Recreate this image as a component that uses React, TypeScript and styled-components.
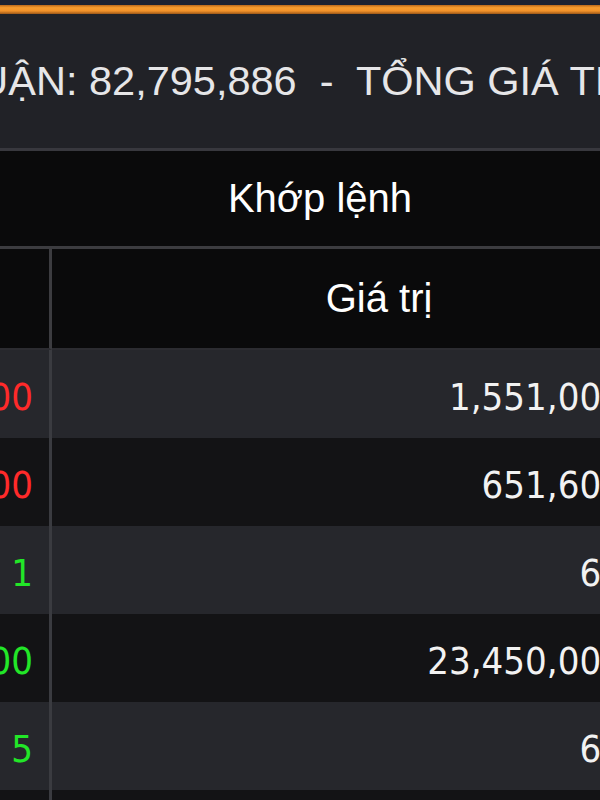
import React from "react";
import styled, { createGlobalStyle } from "styled-components";

const GlobalStyle = createGlobalStyle`
  html, body {
    margin: 0;
    padding: 0;
    background: #0b0b0c;
    overflow: hidden;
  }
  body {
    width: 600px;
    height: 800px;
    font-family: "Liberation Sans", Arial, sans-serif;
  }
`;

const Page = styled.div`
  width: 600px;
  height: 800px;
  overflow: hidden;
  display: flex;
  flex-direction: column;
  background: #0b0b0c;
`;

const TopStrip = styled.div`
  height: 5px;
  background: #1c2131;
  flex-shrink: 0;
`;

const AccentBar = styled.div`
  height: 9px;
  flex-shrink: 0;
  background: linear-gradient(
    to bottom,
    #b8671c 0%,
    #f59a2e 30%,
    #f3932a 65%,
    #9c5718 100%
  );
`;

const SummaryBar = styled.div`
  height: 134px;
  flex-shrink: 0;
  background: #212227;
  border-bottom: 3px solid #38383e;
  display: flex;
  align-items: center;
  overflow: hidden;
  white-space: nowrap;
`;

const SummaryText = styled.span`
  margin-left: -77px;
  font-family: "Liberation Sans", Arial, sans-serif;
  font-size: 41.5px;
  color: #e6e6e8;
  white-space: pre;
`;

const TableViewport = styled.div`
  flex: 1;
  overflow: hidden;
`;

const Grid = styled.div`
  margin-left: -66px;
  width: 772px;
  display: grid;
  grid-template-columns: 118px 1fr;
`;

const GroupHeader = styled.div`
  grid-column: 1 / span 2;
  height: 95px;
  background: #0a0a0b;
  border-bottom: 3px solid #3c3c40;
  display: flex;
  align-items: center;
  justify-content: center;
  font-family: "Liberation Sans", Arial, sans-serif;
  font-size: 40px;
  color: #ffffff;
`;

const ColHeader = styled.div<{ $divider?: boolean }>`
  height: 99px;
  background: #0a0a0b;
  border-bottom: 2px solid #2c2c31;
  border-right: ${(p) => (p.$divider ? "3px solid #3c3c40" : "none")};
  display: flex;
  align-items: center;
  justify-content: center;
  font-family: "Liberation Sans", Arial, sans-serif;
  font-size: 40px;
  color: #ffffff;
`;

const Cell = styled.div<{ $odd: boolean; $divider?: boolean; $tone?: "up" | "down" | "plain" }>`
  height: 88px;
  box-sizing: border-box;
  padding-top: 6px;
  background: ${(p) => (p.$odd ? "#26272c" : "#131315")};
  border-right: ${(p) => (p.$divider ? "3px solid #3a3b40" : "none")};
  display: flex;
  align-items: center;
  justify-content: flex-end;
  padding-right: ${(p) => (p.$divider ? "16px" : "7px")};
  font-family: "DejaVu Sans Condensed", "DejaVu Sans", sans-serif;
  font-stretch: condensed;
  font-size: 38px;
  color: ${(p) =>
    p.$tone === "up" ? "#22e628" : p.$tone === "down" ? "#ff2a2a" : "#f2f2f2"};
`;

type Row = { vol: string; tone: "up" | "down"; value: string };

const rows: Row[] = [
  { vol: "2,200", tone: "down", value: "1,551,000,000" },
  { vol: "9,300", tone: "down", value: "651,600,000" },
  { vol: "1", tone: "up", value: "62,000" },
  { vol: "2,500", tone: "up", value: "23,450,000,000" },
  { vol: "5", tone: "up", value: "61,500" },
  { vol: "1,000", tone: "up", value: "9,380,000" },
];

export default function App() {
  return (
    <>
      <GlobalStyle />
      <Page>
        <TopStrip />
        <AccentBar />
        <SummaryBar>
          <SummaryText>
            {"THUẬN: 82,795,886  -  TỔNG GIÁ TRỊ THỎA THUẬN: 1,945,320,000"}
          </SummaryText>
        </SummaryBar>
        <TableViewport>
          <Grid>
            <GroupHeader>Khớp lệnh</GroupHeader>
            <ColHeader $divider />
            <ColHeader>Giá trị</ColHeader>
            {rows.map((r, i) => (
              <React.Fragment key={i}>
                <Cell $odd={i % 2 === 0} $divider $tone={r.tone}>
                  {r.vol}
                </Cell>
                <Cell $odd={i % 2 === 0} $tone="plain">
                  {r.value}
                </Cell>
              </React.Fragment>
            ))}
          </Grid>
        </TableViewport>
      </Page>
    </>
  );
}
